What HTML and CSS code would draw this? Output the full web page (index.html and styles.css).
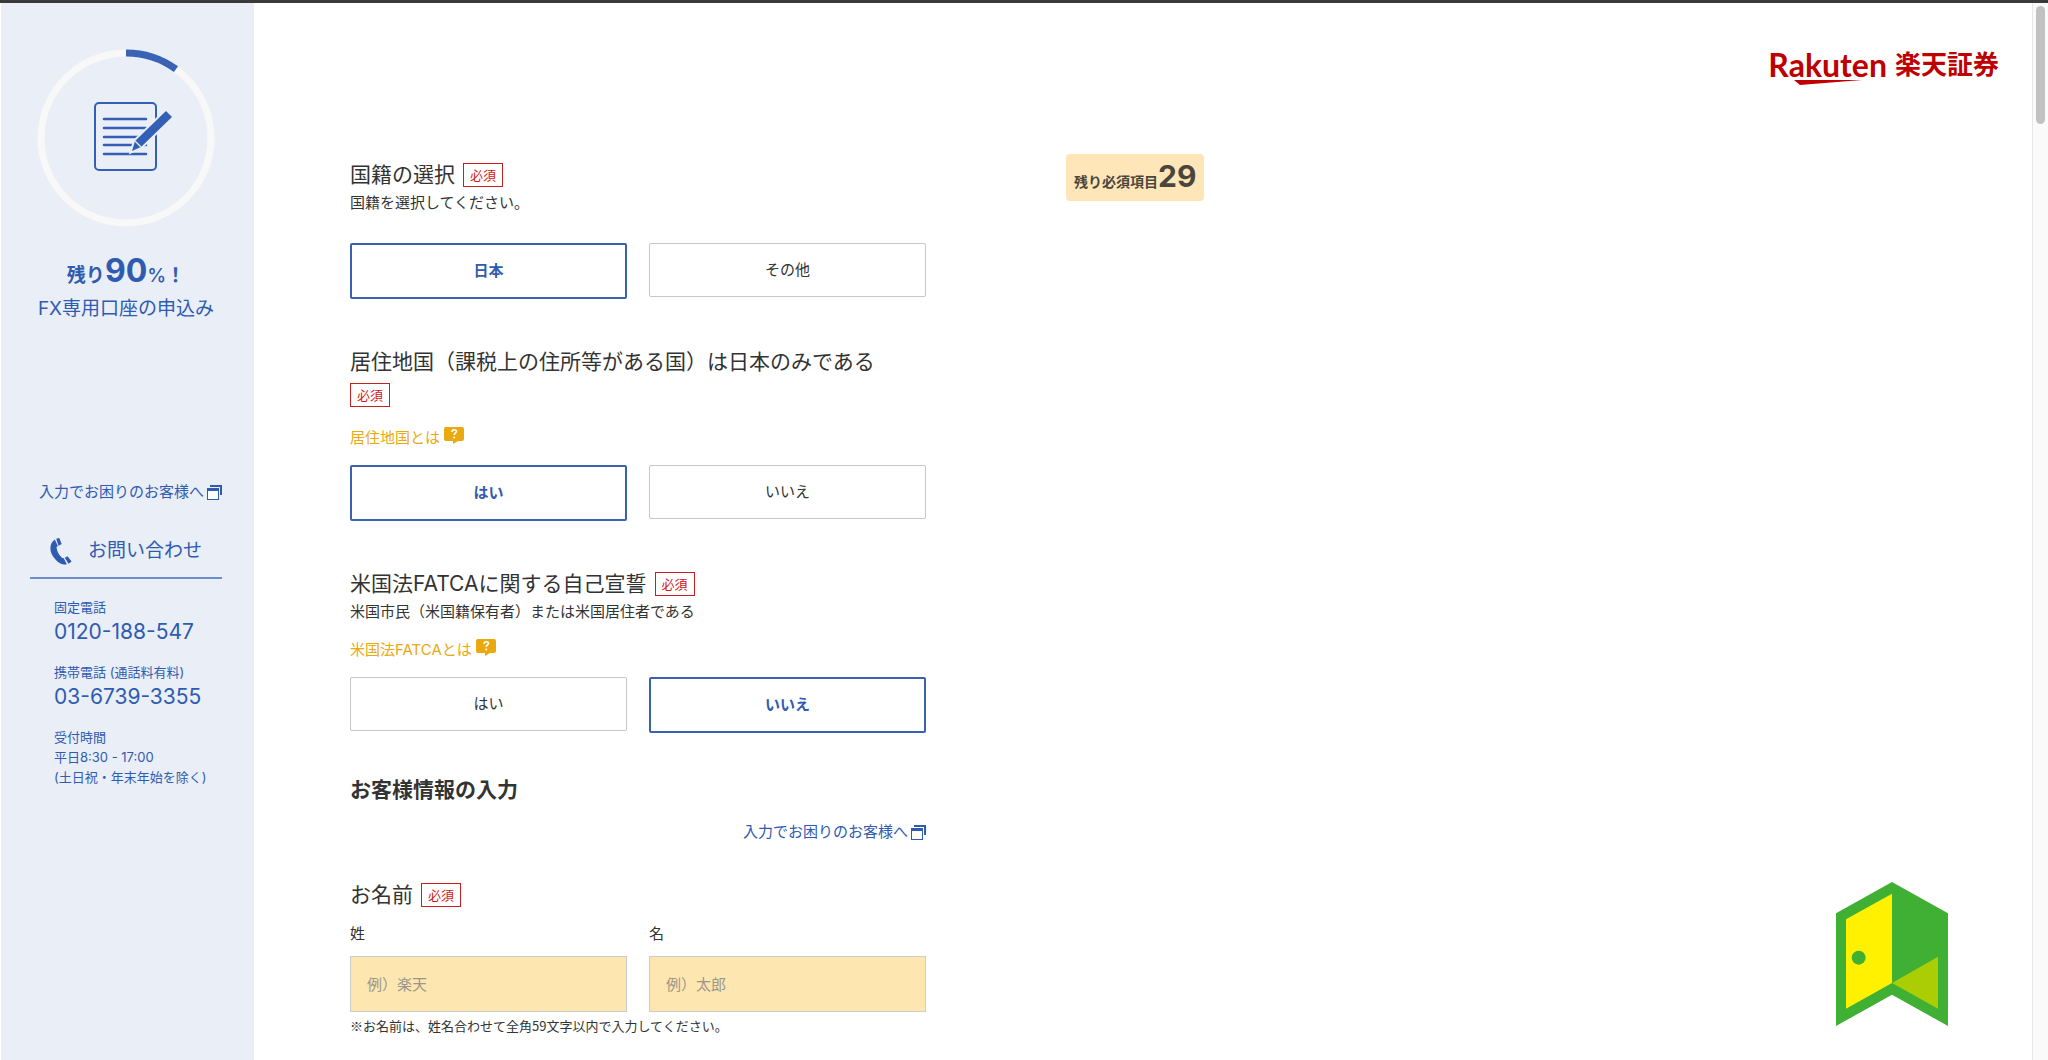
FILE: index.html
```html
<!DOCTYPE html>
<html lang="ja">
<head>
<meta charset="utf-8">
<meta name="viewport" content="width=device-width, initial-scale=1">
<title>FX専用口座の申込み</title>
<link rel="stylesheet" href="styles.css">
</head>
<body>
<svg class="symbols" aria-hidden="true">
  <symbol id="window" viewBox="0 0 15 15">
    <path d="M3 0h12v10h-2V2H3z" fill="currentColor"/>
    <path d="M0 3h12v12H0z" fill="currentColor"/>
    <path class="window-pane" d="M1 6h10v8H1z"/>
  </symbol>
  <symbol id="help" viewBox="0 0 20 17">
    <path d="M2 0h16a2 2 0 0 1 2 2v10a2 2 0 0 1-2 2h-4l-5 3v-3H2a2 2 0 0 1-2-2V2a2 2 0 0 1 2-2z" fill="currentColor"/>
    <path d="M8 5c0-3 4.500-3 4.500-.5C12.500 6 10.200 6 10.200 8" fill="none" stroke="#fff" stroke-width="1.600"/>
    <circle cx="10.200" cy="10.500" r="1" fill="#fff"/>
  </symbol>
</svg>
<div class="page">
  <aside class="sidebar">
    <svg class="progress" viewBox="0 0 178 178" role="img" aria-label="残り90%">
      <circle cx="89" cy="89" r="85" fill="none" stroke="#f7f8f7" stroke-width="7"/>
      <path d="M89 4A85 85 0 0 1 139 20.200" fill="none" stroke="#3a63b5" stroke-width="7"/>
      <rect x="58" y="54" width="61" height="67" rx="4" fill="none" stroke="#3360b5" stroke-width="2"/>
      <path d="M67 70h42M67 79h42M67 88h42M67 96h42M67 105h42" stroke="#3360b5" stroke-width="2.500" stroke-linecap="round"/>
      <path d="M129 62l6 6-31 30-9 4 3-10z" fill="#3360b5" stroke="#e9eef7" stroke-width="4" paint-order="stroke"/>
      <path d="M98 92l6 6" stroke="#e9eef7" stroke-width="1.200"/>
    </svg>
    <p class="remain">残り<span class="remain-number">90</span><span class="remain-unit">%</span>！</p>
    <p class="account">FX専用口座の申込み</p>
    <a class="window-link side-help" href="#">入力でお困りのお客様へ<svg class="window-icon"><use href="#window"/></svg></a>
    <h2 class="contact">
      <svg class="phone" viewBox="0 0 64 78" aria-hidden="true">
        <path d="M14 4C-4 16-3 44 16 62c10 12 22 17 33 14L40 59C32 58 20 42 19 26l4-3z" fill="currentColor"/>
        <path d="M18 2l9-2 7 17-9 5zM43 57l8-4 12 15-9 7z" fill="currentColor"/>
      </svg>
      お問い合わせ
    </h2>
    <dl class="numbers">
      <dt>固定電話</dt>
      <dd class="number">0120-188-547</dd>
      <dt>携帯電話 (通話料有料)</dt>
      <dd class="number">03-6739-3355</dd>
      <dt>受付時間</dt>
      <dd>平日8:30 - 17:00</dd>
      <dd>(土日祝・年末年始を除く)</dd>
    </dl>
  </aside>
  <main class="main">
    <header class="header">
      <a class="logo" href="#">
        <span class="logo-latin">Rakuten</span>
        <span class="logo-kanji">楽天証券</span>
        <svg class="logo-stroke" viewBox="0 0 68 5" aria-hidden="true"><path d="M0 0h68L6 5z" fill="#bf0000"/></svg>
      </a>
    </header>
    <div class="content">
      <form class="form">
        <section class="question">
          <h2 class="title">国籍の選択<span class="required">必須</span></h2>
          <p class="lead lead-last">国籍を選択してください。</p>
          <div class="pair">
            <button type="button" class="choice choice-on" aria-pressed="true">日本</button>
            <button type="button" class="choice" aria-pressed="false">その他</button>
          </div>
        </section>
        <section class="question">
          <h2 class="title">居住地国（課税上の住所等がある国）は日本のみである<br><span class="required required-alone">必須</span></h2>
          <a class="what" href="#">居住地国とは<svg class="help-icon"><use href="#help"/></svg></a>
          <div class="pair">
            <button type="button" class="choice choice-on" aria-pressed="true">はい</button>
            <button type="button" class="choice" aria-pressed="false">いいえ</button>
          </div>
        </section>
        <section class="question">
          <h2 class="title">米国法FATCAに関する自己宣誓<span class="required">必須</span></h2>
          <p class="lead">米国市民（米国籍保有者）または米国居住者である</p>
          <a class="what" href="#">米国法FATCAとは<svg class="help-icon"><use href="#help"/></svg></a>
          <div class="pair">
            <button type="button" class="choice" aria-pressed="false">はい</button>
            <button type="button" class="choice choice-on" aria-pressed="true">いいえ</button>
          </div>
        </section>
        <section class="customer">
          <h2 class="title title-bold">お客様情報の入力</h2>
          <a class="window-link form-help" href="#">入力でお困りのお客様へ<svg class="window-icon"><use href="#window"/></svg></a>
          <h3 class="title">お名前<span class="required">必須</span></h3>
          <div class="pair names">
            <div class="field">
              <label for="family">姓</label>
              <input id="family" type="text" placeholder="例）楽天">
            </div>
            <div class="field">
              <label for="given">名</label>
              <input id="given" type="text" placeholder="例）太郎">
            </div>
          </div>
          <p class="note">※お名前は、姓名合わせて全角59文字以内で入力してください。</p>
        </section>
      </form>
      <p class="counter">残り必須項目<span class="counter-number">29</span></p>
    </div>
  </main>
  <div class="track"><div class="thumb"></div></div>
</div>
<button type="button" class="guide" aria-label="ご案内">
  <svg viewBox="0 0 336 432">
    <path d="M0 94L168 0l168 94v338l-168-94L0 432z" fill="#3fb034"/>
    <path d="M30 112l138-77v268L30 380z" fill="#fff100"/>
    <path d="M168 303l138-79v156z" fill="#abcd03"/>
    <circle cx="68" cy="227" r="21" fill="#3fb034"/>
  </svg>
</button>
</body>
</html>
```
FILE: styles.css
```css
* {
  box-sizing: border-box;
}

body,
h2,
h3,
p,
dl,
dd {
  margin: 0;
  font-weight: 400;
}

body {
  background: #fff;
  color: #333;
  font-family: Inter, "Noto Sans CJK JP", sans-serif;
  font-size: 15px;
  line-height: 22px;
}

button,
input {
  font: inherit;
}

a {
  text-decoration: none;
}

svg {
  display: block;
}

.symbols {
  position: absolute;
  width: 0;
  height: 0;
}

.window-pane {
  fill: #fff;
}

.page {
  display: grid;
  grid-template-columns: 254px 1fr 16px;
  min-height: 100vh;
  border-top: 3px solid #3a3a3a;
}

/* Sidebar */

.sidebar {
  display: flex;
  flex-direction: column;
  padding: 46px 32px 0 29px;
  border-left: 1px solid #fff;
  background: #e9eef7;
  color: #2f5bb0;
}

.progress {
  align-self: center;
  width: 178px;
  height: 178px;
}

.remain {
  display: flex;
  align-items: baseline;
  justify-content: center;
  margin-top: 22px;
  font-size: 19px;
  font-weight: 700;
  line-height: 22px;
  white-space: nowrap;
}

.remain-number {
  font-size: 32px;
  line-height: 44px;
}

.remain-unit {
  font-weight: 500;
}

.account {
  margin-top: 2px;
  font-size: 19px;
  line-height: 28px;
  text-align: center;
  white-space: nowrap;
}

.window-link {
  display: flex;
  align-items: center;
  justify-content: flex-end;
  gap: 3px;
  color: #2f5bb0;
  white-space: nowrap;
}

.window-icon {
  width: 15px;
  height: 15px;
}

.side-help {
  margin-top: 158px;
}

.contact {
  display: flex;
  align-items: center;
  gap: 16px;
  margin-top: 29px;
  padding: 0 20px 7px;
  border-bottom: 2px solid #6f8dcc;
  font-size: 19px;
  line-height: 38px;
  white-space: nowrap;
}

.phone {
  width: 22px;
  height: 27px;
}

.numbers {
  padding: 18px 0 0 24px;
  font-size: 13px;
  line-height: 20px;
  white-space: nowrap;
}

.number {
  margin-bottom: 15px;
  font-size: 21px;
  line-height: 30px;
}

/* Header */

.header {
  display: flex;
  justify-content: flex-end;
  height: 155px;
  padding: 44px 33px 0 0;
}

.logo {
  position: relative;
  display: flex;
  gap: 8px;
  height: 40px;
  color: #bf0000;
  font-weight: 700;
  line-height: 36px;
}

.logo-latin {
  font-family: Lato, sans-serif;
  font-size: 32px;
}

.logo-kanji {
  font-size: 26px;
}

.logo-stroke {
  position: absolute;
  top: 33px;
  left: 26px;
  width: 68px;
  height: 5px;
}

/* Form */

.content {
  display: flex;
  align-items: flex-start;
  gap: 140px;
  padding: 0 24px 20px 96px;
}

.form {
  flex: 0 1 576px;
}

.question {
  margin-bottom: 46px;
}

.question:nth-child(3) {
  margin-bottom: 40px;
}

.title {
  font-size: 21px;
  line-height: 33px;
}

.title-bold {
  font-weight: 700;
}

.required {
  display: inline-block;
  margin: 0 0 2px 8px;
  padding: 0 6px;
  border: 1px solid #c82020;
  color: #d01818;
  font-size: 13px;
  line-height: 22px;
  vertical-align: middle;
}

.required-alone {
  margin-left: 0;
}

.lead {
  margin-top: 1px;
}

.lead-last {
  margin-bottom: 29px;
}

.what {
  display: flex;
  align-items: flex-start;
  gap: 4px;
  margin: 16px 0;
  color: #e9a90f;
}

.help-icon {
  width: 20px;
  height: 17px;
}

.pair {
  display: grid;
  grid-template-columns: 1fr 1fr;
  align-items: start;
  gap: 22px;
}

.choice {
  min-height: 54px;
  padding: 15px;
  border: 1px solid #c6c6c6;
  border-radius: 2px;
  background: #fff;
  color: #333;
}

.choice-on {
  min-height: 56px;
  border: 2px solid #3a62af;
  color: #2f5bb0;
  font-weight: 700;
}

.form-help {
  margin: 15px 0 35px;
}

.names {
  margin-top: 12px;
}

.field {
  display: grid;
  gap: 11px;
}

.field input {
  width: 100%;
  height: 56px;
  padding: 0 16px;
  border: 1px solid #ccc;
  border-radius: 0;
  background: #fee6b1;
  color: #333;
}

.field input::placeholder {
  color: #9c968a;
  opacity: 1;
}

.note {
  margin-top: 3px;
  font-family: "Noto Sans CJK JP", sans-serif;
  font-size: 13px;
}

.counter {
  display: flex;
  align-items: baseline;
  margin-top: -4px;
  padding: 2px 8px 5px;
  border-radius: 4px;
  background: #fee6b8;
  color: #4a463e;
  font-size: 14px;
  font-weight: 700;
  line-height: 20px;
  white-space: nowrap;
}

.counter-number {
  font-size: 30px;
  line-height: 40px;
}

/* Scroll track */

.track {
  padding: 3px 3px 0;
  border-left: 1px solid #e7e7e7;
  background: #fafafa;
}

.thumb {
  width: 9px;
  height: 118px;
  border-radius: 5px;
  background: #c1c1c1;
}

/* Floating guide button */

.guide {
  position: fixed;
  right: 100px;
  bottom: 34px;
  width: 112px;
  height: 144px;
  padding: 0;
  border: 0;
  background: none;
}
```
